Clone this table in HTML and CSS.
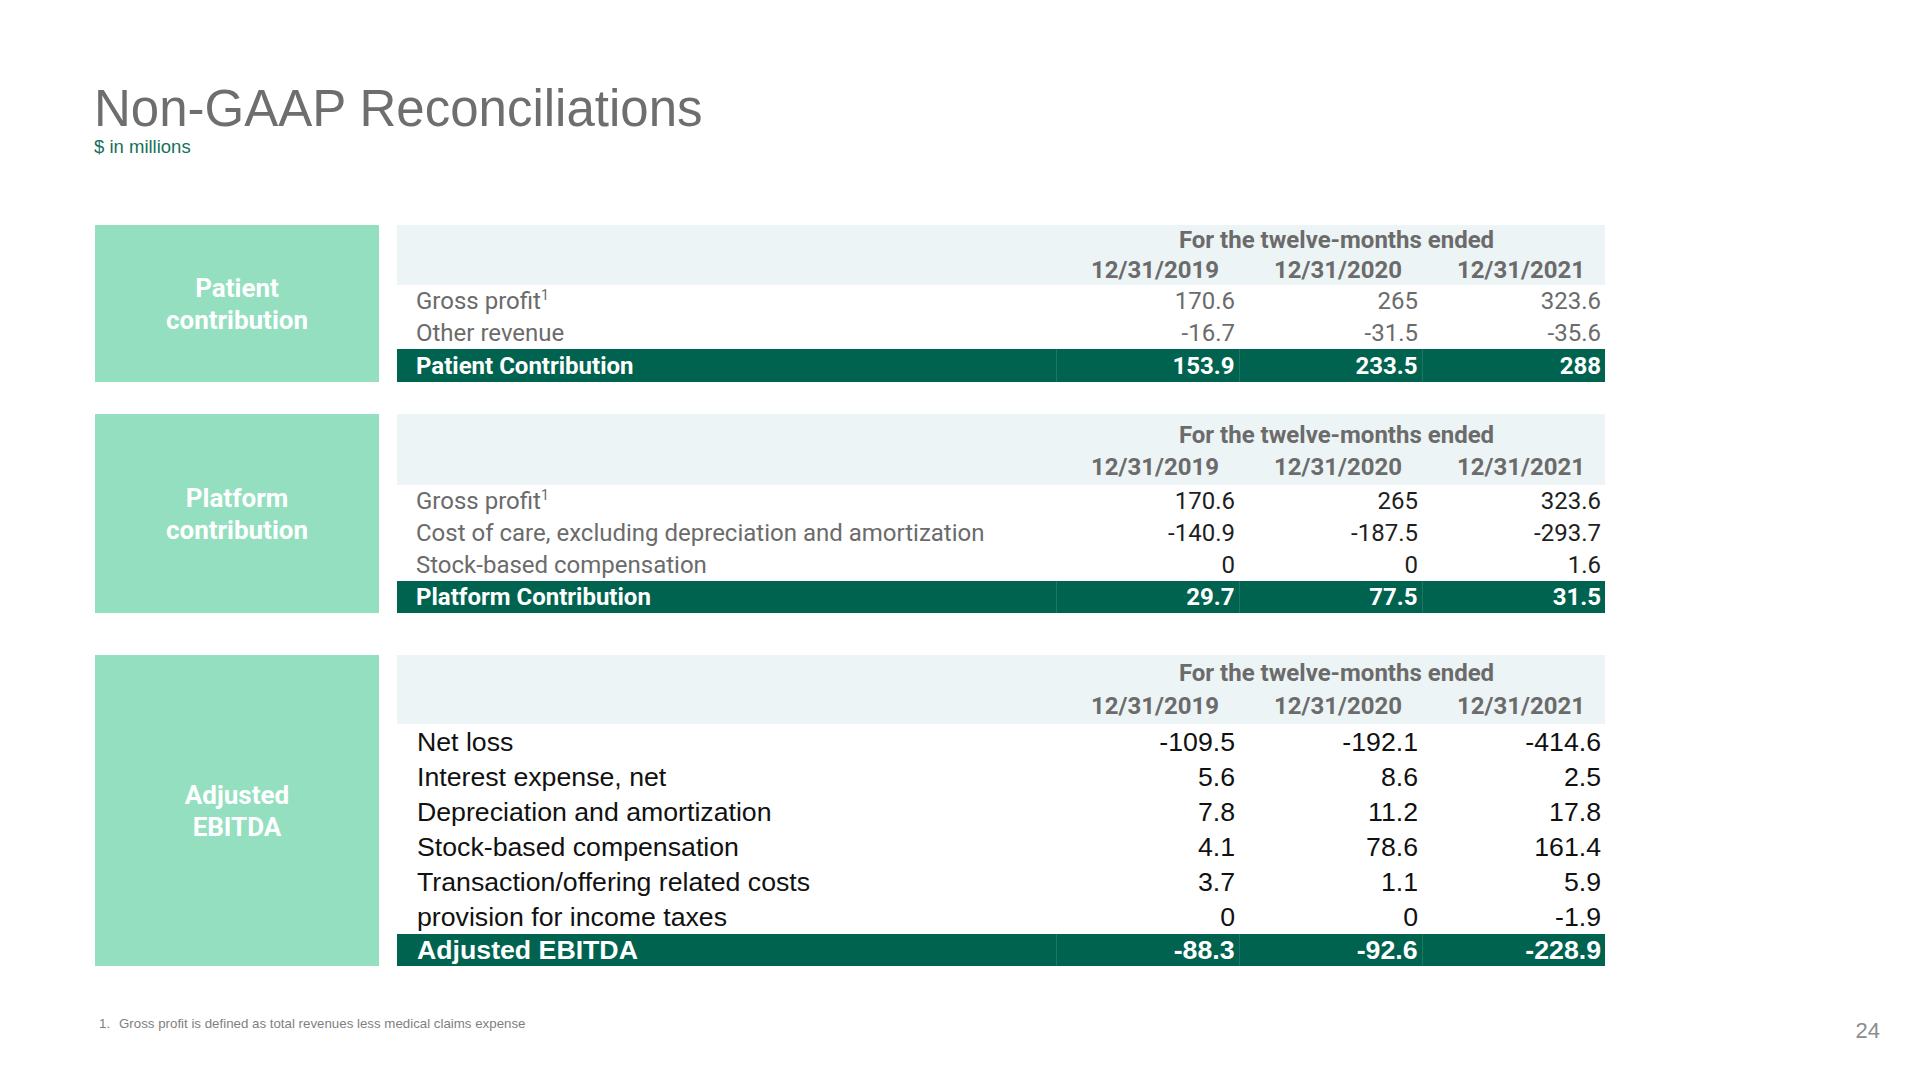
FILE: index.html
```html
<!DOCTYPE html>
<html lang="en">
<head>
  <meta charset="UTF-8">
  <title>Non-GAAP Reconciliations</title>
  <link rel="stylesheet" href="styles.css">
</head>
<body>

<div class="slide">
  <h1 class="slide-title">Non-GAAP Reconciliations</h1>
  <p class="slide-sub">$ in millions</p>

  <div class="recon-list">
    <!-- Patient contribution -->
    <div class="recon recon-patient">
      <div class="recon-name">Patient<br>contribution</div>
      <table class="recon-table">
        <colgroup>
          <col class="col-label">
          <col class="col-num">
          <col class="col-num">
          <col class="col-num">
        </colgroup>
        <thead>
          <tr class="hd-top"><th></th><th colspan="3" class="hd-span">For the twelve-months ended</th></tr>
          <tr class="hd-dates"><th></th><th>12/31/2019</th><th>12/31/2020</th><th>12/31/2021</th></tr>
        </thead>
        <tbody>
          <tr><td class="lbl">Gross profit<sup>1</sup></td><td>170.6</td><td>265</td><td>323.6</td></tr>
          <tr><td class="lbl">Other revenue</td><td>-16.7</td><td>-31.5</td><td>-35.6</td></tr>
          <tr class="total"><td class="lbl">Patient Contribution</td><td>153.9</td><td>233.5</td><td>288</td></tr>
        </tbody>
      </table>
    </div>

    <!-- Platform contribution -->
    <div class="recon recon-platform">
      <div class="recon-name">Platform<br>contribution</div>
      <table class="recon-table">
        <colgroup>
          <col class="col-label">
          <col class="col-num">
          <col class="col-num">
          <col class="col-num">
        </colgroup>
        <thead>
          <tr class="hd-top"><th></th><th colspan="3" class="hd-span">For the twelve-months ended</th></tr>
          <tr class="hd-dates"><th></th><th>12/31/2019</th><th>12/31/2020</th><th>12/31/2021</th></tr>
        </thead>
        <tbody>
          <tr><td class="lbl">Gross profit<sup>1</sup></td><td>170.6</td><td>265</td><td>323.6</td></tr>
          <tr><td class="lbl">Cost of care, excluding depreciation and amortization</td><td>-140.9</td><td>-187.5</td><td>-293.7</td></tr>
          <tr><td class="lbl">Stock-based compensation</td><td>0</td><td>0</td><td>1.6</td></tr>
          <tr class="total"><td class="lbl">Platform Contribution</td><td>29.7</td><td>77.5</td><td>31.5</td></tr>
        </tbody>
      </table>
    </div>

    <!-- Adjusted EBITDA -->
    <div class="recon recon-ebitda">
      <div class="recon-name">Adjusted<br>EBITDA</div>
      <table class="recon-table">
        <colgroup>
          <col class="col-label">
          <col class="col-num">
          <col class="col-num">
          <col class="col-num">
        </colgroup>
        <thead>
          <tr class="hd-top"><th></th><th colspan="3" class="hd-span">For the twelve-months ended</th></tr>
          <tr class="hd-dates"><th></th><th>12/31/2019</th><th>12/31/2020</th><th>12/31/2021</th></tr>
        </thead>
        <tbody>
          <tr><td class="lbl">Net loss</td><td>-109.5</td><td>-192.1</td><td>-414.6</td></tr>
          <tr><td class="lbl">Interest expense, net</td><td>5.6</td><td>8.6</td><td>2.5</td></tr>
          <tr><td class="lbl">Depreciation and amortization</td><td>7.8</td><td>11.2</td><td>17.8</td></tr>
          <tr><td class="lbl">Stock-based compensation</td><td>4.1</td><td>78.6</td><td>161.4</td></tr>
          <tr><td class="lbl">Transaction/offering related costs</td><td>3.7</td><td>1.1</td><td>5.9</td></tr>
          <tr><td class="lbl">provision for income taxes</td><td>0</td><td>0</td><td>-1.9</td></tr>
          <tr class="total"><td class="lbl">Adjusted EBITDA</td><td>-88.3</td><td>-92.6</td><td>-228.9</td></tr>
        </tbody>
      </table>
    </div>
  </div>

  <div class="slide-foot">
    <p class="footnote"><span class="footnote-no">1.</span>Gross profit is defined as total revenues less medical claims expense</p>
    <span class="page-no">24</span>
  </div>
</div>

</body>
</html>
```

FILE: styles.css
```css
* {
  margin: 0;
  padding: 0;
  box-sizing: border-box;
}

body {
  background: #ffffff;
  font-family: Roboto, "Liberation Sans", Arial, sans-serif;
}

.slide {
  width: 1920px;
  height: 1080px;
  padding-left: 94px;
  display: flex;
  flex-direction: column;
}

.slide-title {
  margin-top: 82.5px;
  font-family: "Liberation Sans", Arial, sans-serif;
  font-size: 51px;
  line-height: 51px;
  font-weight: normal;
  color: #6e6e6e;
}

.slide-sub {
  margin-top: 3.5px;
  font-family: "Liberation Sans", Arial, sans-serif;
  font-size: 18.5px;
  line-height: 20px;
  color: #16705a;
}

.recon-list {
  margin-top: 68px;
  display: flex;
  flex-direction: column;
}

.recon {
  display: flex;
  gap: 18px;
  margin-left: 1px;
}

.recon-platform {
  margin-top: 32px;
}

.recon-ebitda {
  margin-top: 42px;
}

/* green block on the left */
.recon-name {
  width: 284px;
  background: #93dfbf;
  color: #ffffff;
  font-weight: 700;
  font-size: 26px;
  line-height: 32px;
  text-align: center;
  display: flex;
  align-items: center;
  justify-content: center;
}

.recon-table {
  width: 1208px;
  border-collapse: collapse;
  table-layout: fixed;
  font-size: 24px;
  color: #6b6b6b;
}

.col-label {
  width: 659px;
}

.col-num {
  width: 183px;
}

.recon-table th,
.recon-table td {
  padding: 0;
  white-space: nowrap;
}

/* header */
.recon-table thead tr {
  background: #edf4f5;
}

.recon-table th {
  font-weight: 700;
  color: #6b6b6b;
  line-height: 29px;
  vertical-align: bottom;
  text-align: right;
  padding-right: 20px;
}

.recon-table th.hd-span {
  text-align: center;
  padding-right: 0;
  padding-left: 12px;
}

.recon-patient .hd-top { height: 30px; }
.recon-patient .hd-dates { height: 30px; }
.recon-platform .hd-top { height: 36px; }
.recon-platform .hd-dates { height: 35px; }
.recon-ebitda .hd-top { height: 33px; }
.recon-ebitda .hd-dates { height: 36px; }

.recon-platform .hd-dates th,
.recon-ebitda .hd-dates th {
  vertical-align: middle;
}

/* body rows */
.recon-table td {
  height: 32px;
  line-height: 28px;
  text-align: right;
  padding-right: 4px;
  vertical-align: middle;
}

.recon-table td.lbl {
  text-align: left;
  padding-left: 19px;
  padding-right: 0;
}

.recon-table sup {
  font-size: 14px;
  line-height: 0;
  vertical-align: 9px;
}

.recon-platform td {
  color: #1e1e1e;
}

.recon-platform td.lbl {
  color: #6b6b6b;
}

.recon-ebitda td {
  height: 35px;
  font-family: "Liberation Sans", Arial, sans-serif;
  font-size: 26.7px;
  color: #111111;
}

.recon-ebitda td.lbl {
  padding-left: 20px;
}

/* total rows */
.recon-table tr.total td {
  background: #00634f;
  color: #ffffff;
  font-weight: 700;
  height: 33px;
}

.recon-platform tr.total td,
.recon-ebitda tr.total td {
  height: 32px;
}

.recon-table tr.total td + td {
  border-left: 1px solid #1a7862;
}

/* footer */
.slide-foot {
  margin-top: 48px;
  display: flex;
  align-items: flex-start;
  padding-left: 5px;
  padding-right: 40px;
}

.footnote {
  font-family: "Liberation Sans", Arial, sans-serif;
  font-size: 13.3px;
  line-height: 20px;
  color: #7f7f7f;
}

.footnote-no {
  display: inline-block;
  width: 20px;
}

.page-no {
  margin-left: auto;
  margin-top: 4px;
  font-family: "Liberation Sans", Arial, sans-serif;
  font-size: 22px;
  line-height: 26px;
  color: #8c8c8c;
}
```
